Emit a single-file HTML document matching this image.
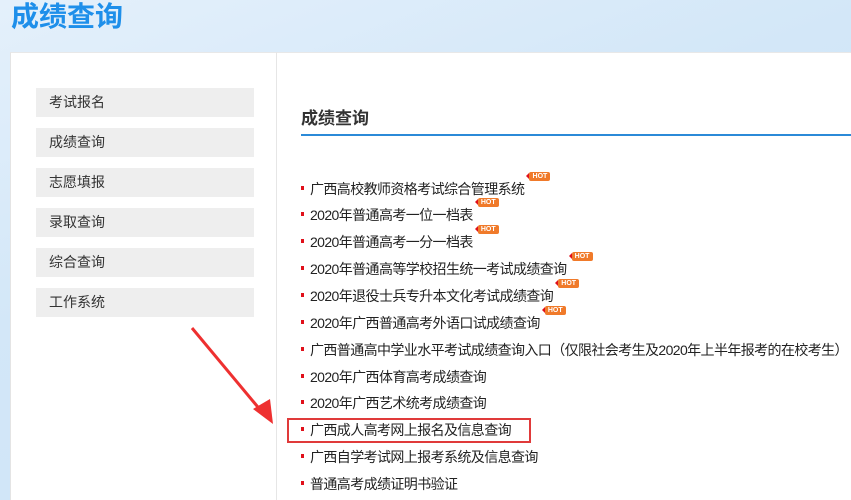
<!DOCTYPE html>
<html><head><meta charset="utf-8"><style>
*{margin:0;padding:0;box-sizing:border-box}
body{width:851px;height:500px;overflow:hidden;position:relative;font-family:"Liberation Sans","Noto Sans CJK SC",sans-serif;background:linear-gradient(160deg,#e4f0fb 0%,#d3e7f8 40%,#cde3f7 100%)}
.title{position:absolute;left:11px;top:-5px;font-size:28px;font-weight:bold;color:#1e8fea}
.panel{position:absolute;left:10px;top:52px;width:841px;height:448px;background:#fff;border-left:1px solid #e4e4e4;border-top:1px solid #e8e8e8}
.div{position:absolute;left:276px;top:52px;width:1px;height:448px;background:#e6e6e6}
.nav{position:absolute;left:36px;width:218px;height:29px;background:#eeeeee;font-size:14px;color:#333;line-height:29px;padding-left:13px}
.h{position:absolute;left:301px;top:104px;font-size:17px;font-weight:bold;color:#333}
.hl{position:absolute;left:301px;top:134px;width:550px;height:2px;background:#2b8ad8}
.li{position:absolute;left:301px;font-size:14px;color:#222;line-height:20px;white-space:nowrap;letter-spacing:-0.6px}
.li:before{content:"";display:inline-block;width:3px;height:4px;background:#e0101a;margin-right:6px;vertical-align:middle;position:relative;top:-2px}
.hot{display:inline-block;position:relative;top:-7px;margin-left:5px;width:21px;height:9px;background:#f07a2a;color:#fff;font-size:7px;line-height:9px;text-align:center;border-radius:2px;font-weight:bold;letter-spacing:0;vertical-align:top}
.hot:before{content:"";position:absolute;left:-3px;top:1px;border:3px solid transparent;border-right:3px solid #e0101a;border-left:0}
.box{position:absolute;left:287px;top:418px;width:244px;height:25px;border:2px solid #e03a3a}
</style></head><body>
<div class="title">成绩查询</div>
<div class="panel"></div>
<div class="div"></div>
<div class="nav" style="top:88px">考试报名</div>
<div class="nav" style="top:128px">成绩查询</div>
<div class="nav" style="top:168px">志愿填报</div>
<div class="nav" style="top:208px">录取查询</div>
<div class="nav" style="top:248px">综合查询</div>
<div class="nav" style="top:288px">工作系统</div>
<div class="h">成绩查询</div>
<div class="hl"></div>
<div class="li" style="top:179px">广西高校教师资格考试综合管理系统<span class="hot">HOT</span></div>
<div class="li" style="top:205px">2020年普通高考一位一档表<span class="hot">HOT</span></div>
<div class="li" style="top:232px">2020年普通高考一分一档表<span class="hot">HOT</span></div>
<div class="li" style="top:259px">2020年普通高等学校招生统一考试成绩查询<span class="hot">HOT</span></div>
<div class="li" style="top:286px">2020年退役士兵专升本文化考试成绩查询<span class="hot">HOT</span></div>
<div class="li" style="top:313px">2020年广西普通高考外语口试成绩查询<span class="hot">HOT</span></div>
<div class="li" style="top:340px">广西普通高中学业水平考试成绩查询入口（仅限社会考生及2020年上半年报考的在校考生）</div>
<div class="li" style="top:367px">2020年广西体育高考成绩查询</div>
<div class="li" style="top:393px">2020年广西艺术统考成绩查询</div>
<div class="li" style="top:420px">广西成人高考网上报名及信息查询</div>
<div class="li" style="top:447px">广西自学考试网上报考系统及信息查询</div>
<div class="li" style="top:474px">普通高考成绩证明书验证</div>
<div class="box"></div>
<svg style="position:absolute;left:0;top:0" width="851" height="500"><line x1="192" y1="328" x2="262" y2="412" stroke="#ee3030" stroke-width="3"/><polygon points="273,424 253,409 270,399" fill="#ee3030"/></svg>
</body></html>
